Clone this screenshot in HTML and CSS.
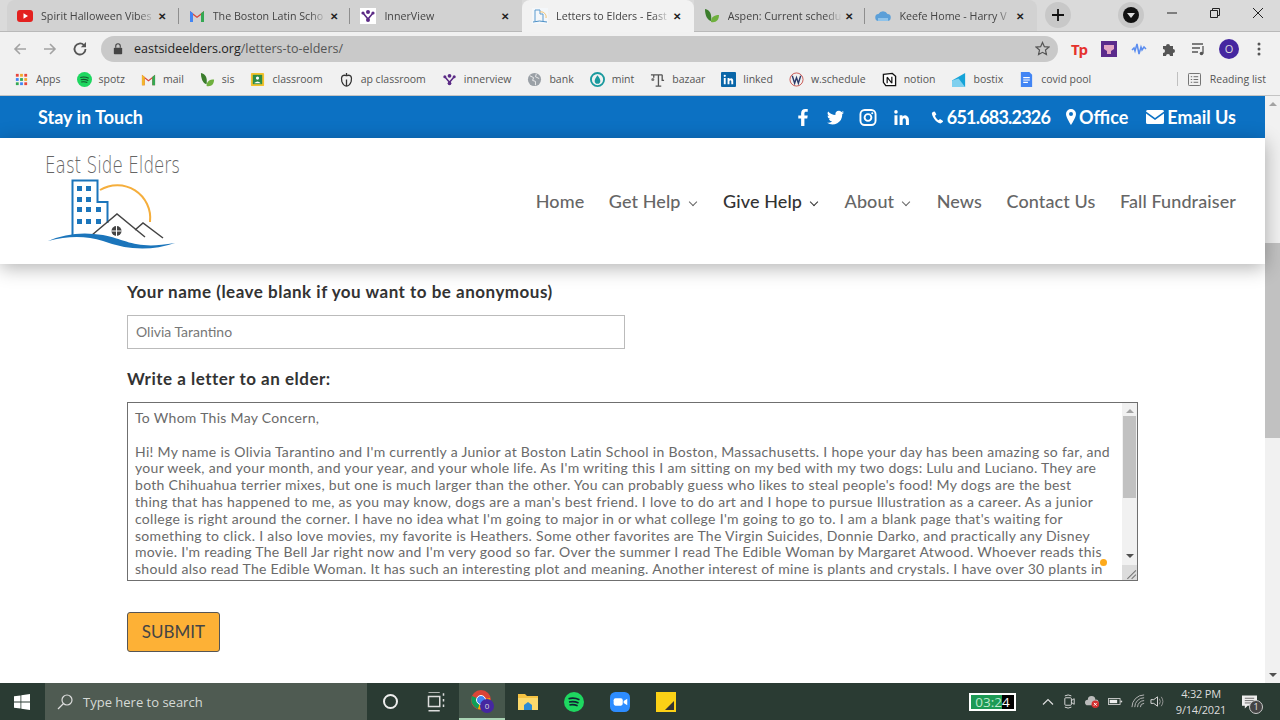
FILE: index.html
```html
<!DOCTYPE html>
<html lang="en">

<head>
    <meta charset="UTF-8">
    <title>Letters to Elders - East Side Elders</title>
    <link rel="stylesheet" href="styles.css">
</head>

<body>
    <!-- TABS -->
    <div class="tabstrip">
        <div class="tab tabSep tabFirst">
            <svg class="fav" viewBox="0 0 16 16"><rect y="2" width="16" height="12" rx="3" fill="#e3211f"/><path d="M6.5 5.2v5.6L11 8z" fill="#fff"/></svg>
            <span class="tabTitle">Spirit Halloween Vibes</span><span class="tabClose">✕</span>
        </div>
        <div class="tab tabSep">
            <svg class="fav" viewBox="0 0 16 16"><path d="M1 14V3l7 5.5L15 3v11h-3V7L8 10 4 7v7z" fill="#d9453a"/><path d="M1 14V3l3 2.3V14z" fill="#4285f4"/><path d="M15 14V3l-3 2.3V14z" fill="#34a853"/></svg>
            <span class="tabTitle">The Boston Latin Scho</span><span class="tabClose">✕</span>
        </div>
        <div class="tab">
            <svg class="fav" viewBox="0 0 16 16"><rect width="16" height="16" fill="#fff"/><path d="M3 5l5 6 5-6" fill="none" stroke="#5b2a86" stroke-width="1.6"/><circle cx="8" cy="4" r="2" fill="#5b2a86"/><circle cx="3" cy="5" r="1.6" fill="#5b2a86"/><circle cx="13" cy="5" r="1.6" fill="#5b2a86"/><circle cx="8" cy="12" r="2" fill="#5b2a86"/></svg>
            <span class="tabTitle">InnerView</span><span class="tabClose">✕</span>
        </div>
        <div class="tab tabActive">
            <svg class="fav" viewBox="0 0 16 16"><rect width="16" height="16" fill="#f4f7fa"/><path d="M3 13V2h5v4h3v7" fill="none" stroke="#5a9bd0"/><path d="M8 4a5 5 0 0 1 6 6" fill="none" stroke="#f3c06a"/><path d="M1 14q6-2 14 0" fill="none" stroke="#4b8fc6"/></svg>
            <span class="tabTitle">Letters to Elders - East</span><span class="tabClose">✕</span>
        </div>
        <div class="tab tabSep">
            <svg class="fav" viewBox="0 0 16 16"><path d="M1 1c5 1 7 5 6 12C3 12 1 7 1 1z" fill="#3b7d2c"/><path d="M7 14c0-5 3-7 8-7 0 5-3 8-8 7z" fill="#6fb03e"/></svg>
            <span class="tabTitle">Aspen: Current schedu</span><span class="tabClose">✕</span>
        </div>
        <div class="tab tabLast">
            <svg class="fav" viewBox="0 0 16 16"><path d="M4 13a3.5 3.5 0 0 1-.5-7A5 5 0 0 1 12.500 6 3.500 3.500 0 0 1 12 13z" fill="#5b9fd8"/><path d="M3 10h10v3H3z" fill="#8fc3ea"/></svg>
            <span class="tabTitle">Keefe Home - Harry V</span><span class="tabClose">✕</span>
        </div>
        <div class="newTab">
            <svg viewBox="0 0 12 12"><path d="M6 0v12M0 6h12" stroke="#111" stroke-width="1.800"/></svg>
        </div>
        <div class="profileBtn"><span class="profileDot"><span class="profileArrow"></span></span></div>
        <div class="winBtn"><svg viewBox="0 0 12 12"><path d="M1 6h10" stroke="#222"/></svg></div>
        <div class="winBtn"><svg viewBox="0 0 12 12"><path d="M1.500 3.500h7v7h-7zM3.500 3.500v-2h7v7h-2" fill="none" stroke="#222"/></svg></div>
        <div class="winBtn"><svg viewBox="0 0 12 12"><path d="M1 1l10 10M11 1L1 11" stroke="#222"/></svg></div>
    </div>

    <!-- ADDRESS BAR -->
    <div class="toolbar">
        <svg class="navIcon" viewBox="0 0 16 16"><path d="M14 8H3M8 3L3 8l5 5" fill="none" stroke="#a3a3a3" stroke-width="1.600"/></svg>
        <svg class="navIcon" viewBox="0 0 16 16"><path d="M2 8h11M8 3l5 5-5 5" fill="none" stroke="#a3a3a3" stroke-width="1.600"/></svg>
        <svg class="navIcon" viewBox="0 0 16 16"><path d="M13.500 8a5.500 5.500 0 1 1-1.600-3.900" fill="none" stroke="#555" stroke-width="1.800"/><path d="M14 1v5.200H8.800z" fill="#555"/></svg>
        <div class="omnibox">
            <svg class="lock" viewBox="0 0 12 14"><rect x="1" y="6" width="10" height="8" rx="1" fill="#444"/><path d="M3.300 6V4a2.700 2.700 0 0 1 5.400 0v2" fill="none" stroke="#444" stroke-width="1.300"/></svg>
            <span class="url"><b>eastsideelders.org</b>/letters-to-elders/</span>
            <svg class="star" viewBox="0 0 16 16"><path d="M8 1.500l2 4.500 4.800.5-3.600 3.200 1 4.800L8 12.100l-4.200 2.400 1-4.800L1.200 6.500 6 6z" fill="none" stroke="#555" stroke-width="1.300"/></svg>
        </div>
        <div class="extensions">
            <span class="ext extTp">Tp</span>
            <span class="ext"><svg viewBox="0 0 16 16"><rect width="16" height="16" fill="#5b2a8c"/><path d="M3 4h10v4l-3 2v3H6v-3L3 8z" fill="#e3a6c4"/></svg></span>
            <span class="ext"><svg viewBox="0 0 16 16"><path d="M1 9l2-2 1 3 2-7 2 10 2-7 1 3 2-3 2 2" fill="none" stroke="#5b8def" stroke-width="1.500"/></svg></span>
            <span class="ext"><svg viewBox="0 0 16 16"><path d="M2 5h3a2 2 0 0 1 4 0h3v3a2 2 0 0 1 0 4v3H9a2 2 0 0 0-4 0H2v-3a2 2 0 0 0 0-4z" fill="#555"/></svg></span>
            <span class="ext"><svg viewBox="0 0 16 16"><path d="M1 3h11M1 7h8M1 11h6" stroke="#555" stroke-width="1.300"/><path d="M12 5v7.500" stroke="#555" stroke-width="1.300"/><circle cx="10.500" cy="12.500" r="1.800" fill="#555"/></svg></span>
            <span class="ext"><span class="avatar">O</span></span>
            <span class="ext"><svg viewBox="0 0 16 16"><circle cx="8" cy="3" r="1.500" fill="#555"/><circle cx="8" cy="8" r="1.500" fill="#555"/><circle cx="8" cy="13" r="1.500" fill="#555"/></svg></span>
        </div>
    </div>

    <!-- BOOKMARKS -->
    <div class="bookmarks">
        <span class="bm"><svg viewBox="0 0 16 16"><path d="M2 2h3v3H2z" fill="#e8453c"/><path d="M6.500 2h3v3h-3z" fill="#f3a82d"/><path d="M11 2h3v3h-3z" fill="#e8453c"/><path d="M2 6.500h3v3H2z" fill="#4285f4"/><path d="M6.500 6.500h3v3h-3z" fill="#34a853"/><path d="M11 6.500h3v3h-3z" fill="#f3a82d"/><path d="M2 11h3v3H2z" fill="#34a853"/><path d="M6.500 11h3v3h-3z" fill="#4285f4"/><path d="M11 11h3v3h-3z" fill="#e8453c"/></svg>Apps</span>
        <span class="bm"><svg viewBox="0 0 16 16"><circle cx="8" cy="8" r="8" fill="#1ed760"/><path d="M3.500 5.800q4.500-1.300 9 .8M4 8.300q4-1 8 .7M4.500 10.700q3.500-.8 6.500.6" fill="none" stroke="#14532d" stroke-width="1.200"/></svg>spotz</span>
        <span class="bm"><svg viewBox="0 0 16 16"><path d="M1 14V3l7 5.500L15 3v11h-3V7L8 10 4 7v7z" fill="#d9453a"/><path d="M1 14V3l3 2.300V14z" fill="#f2b62c"/><path d="M15 14V3l-3 2.300V14z" fill="#34a853"/></svg>mail</span>
        <span class="bm"><svg viewBox="0 0 16 16"><path d="M1 1c5 1 7 5 6 12C3 12 1 7 1 1z" fill="#3b7d2c"/><path d="M7 15c0-5 3-7 8-7 0 5-3 8-8 7z" fill="#6fb03e"/></svg>sis</span>
        <span class="bm"><svg viewBox="0 0 16 16"><rect x="1" y="1" width="14" height="14" rx="1" fill="#f3c22c"/><rect x="3" y="3" width="10" height="10" fill="#2e8b47"/><circle cx="8" cy="6.500" r="1.700" fill="#fff"/><path d="M4.500 12q3.500-4 7 0z" fill="#fff"/></svg>classroom</span>
        <span class="bm"><svg viewBox="0 0 16 16"><path d="M8 4c-5-2-6 2-5 6 1 3 3 5 5 5s4-2 5-5c1-4 0-8-5-6zM8 4V1M8 8v7" fill="none" stroke="#333" stroke-width="1.400"/></svg>ap classroom</span>
        <span class="bm"><svg viewBox="0 0 16 16"><path d="M3 5l5 6 5-6" fill="none" stroke="#5b2a86" stroke-width="1.600"/><circle cx="8" cy="4" r="2" fill="#5b2a86"/><circle cx="3" cy="5" r="1.600" fill="#5b2a86"/><circle cx="13" cy="5" r="1.600" fill="#5b2a86"/><circle cx="8" cy="12" r="2" fill="#5b2a86"/></svg>innerview</span>
        <span class="bm"><svg viewBox="0 0 16 16"><circle cx="8" cy="8" r="7" fill="#9aa0a6"/><path d="M3 4l4 2-1 3 3 1v4M10 2l-1 3 4 2" fill="none" stroke="#eee"/></svg>bank</span>
        <span class="bm"><svg viewBox="0 0 16 16"><circle cx="8" cy="8" r="7" fill="none" stroke="#1a9a9e" stroke-width="2"/><path d="M8 3.500q3 4 3 6a3 3 0 0 1-6 0q0-2 3-6z" fill="#1a9a9e"/></svg>mint</span>
        <span class="bm"><svg viewBox="0 0 16 16"><path d="M1 3h12M4 3v3M9 3v12M6 15h6M13 3v6h2" fill="none" stroke="#555" stroke-width="1.400"/><circle cx="3" cy="8" r="1.600" fill="#777"/></svg>bazaar</span>
        <span class="bm"><svg viewBox="0 0 16 16"><rect width="16" height="16" rx="1" fill="#0a66a8"/><path d="M3 6.500h2V13H3zM7 6.500h2v1q3-2.200 4 1V13h-2V9.500q-1-1.500-2 0V13H7z" fill="#fff"/><circle cx="4" cy="4" r="1.200" fill="#fff"/></svg>linked</span>
        <span class="bm"><svg viewBox="0 0 16 16"><circle cx="8" cy="8" r="7" fill="none" stroke="#c9544f"/><path d="M3.500 4l2.500 8 2-6 2 6 2.500-8" fill="none" stroke="#2a3a6a" stroke-width="1.500"/></svg>w.schedule</span>
        <span class="bm"><svg viewBox="0 0 16 16"><path d="M1.500 2.500L11 1.500l3.500 3V14.500H4L1.500 11z" fill="#fff" stroke="#111" stroke-width="1.400"/><path d="M5.500 5.500v6.500M5.500 5.500l5 6.500M10.500 5v7" stroke="#111" stroke-width="1.300"/></svg>notion</span>
        <span class="bm"><svg viewBox="0 0 16 16"><path d="M0 16V9L14 1v15z" fill="#15a3d8"/><path d="M0 9l7-2 7 9H0z" fill="#7fd0ef"/></svg>bostix</span>
        <span class="bm"><svg viewBox="0 0 16 16"><path d="M2 0h9l3 3v13H2z" fill="#4285f4"/><path d="M4.500 6h7M4.500 8.500h7M4.500 11h5" stroke="#fff" stroke-width="1.200"/></svg>covid pool</span>
        <span class="readingList"><svg viewBox="0 0 14 14"><rect x=".500" y=".500" width="13" height="13" rx="1" fill="none" stroke="#666"/><path d="M3 4h1.500M6 4h5M3 7h1.500M6 7h5M3 10h1.500M6 10h5" stroke="#666"/></svg>Reading list</span>
    </div>

    <!-- PAGE -->
    <div class="viewport">
        <div class="page">
            <div class="topBar">
                <span class="stayTitle">Stay in Touch</span>
                <div class="contactLinks">
                    <svg class="social socialF" viewBox="0 0 10 18"><path d="M3 18V10H0V7h3V4.500C3 1.500 4.800 0 7.300 0H10v3H8.200C7 3 6.500 3.500 6.500 4.700V7H10l-.5 3h-3v8z" fill="#fff"/></svg>
                    <svg class="social socialT" viewBox="0 0 20 16"><path d="M20 2a8 8 0 0 1-2.300.600A4 4 0 0 0 19.500.400a8 8 0 0 1-2.600 1A4 4 0 0 0 10 5 11.500 11.500 0 0 1 1.400.800 4 4 0 0 0 2.600 6.200 4 4 0 0 1 .8 5.700a4 4 0 0 0 3.200 4 4 4 0 0 1-1.800.1 4 4 0 0 0 3.800 2.800A8 8 0 0 1 0 14.200 11.500 11.500 0 0 0 17.900 4 8 8 0 0 0 20 2z" fill="#fff"/></svg>
                    <svg class="social socialI" viewBox="0 0 18 18"><rect x="1" y="1" width="16" height="16" rx="4.500" fill="none" stroke="#fff" stroke-width="2"/><circle cx="9" cy="9" r="3.600" fill="none" stroke="#fff" stroke-width="2"/><circle cx="13.500" cy="4.500" r="1.100" fill="#fff"/></svg>
                    <svg class="social socialL" viewBox="0 0 16 16"><path d="M.5 5.500h3.200V16H.5zM6 5.500h3v1.500q3.500-3 6 .5.900 1.300.9 3V16h-3.200v-5q-.3-2.600-2.200-2.200-1.300.3-1.300 2.200v5H6z" fill="#fff"/><circle cx="2.100" cy="2" r="1.900" fill="#fff"/></svg>
                    <span class="contact contactPhone">
                        <svg viewBox="0 0 14 14"><path d="M3.200.5L1 1.800C.3 5 5.500 12.800 10.300 13.500l2.700-2-.3-1-3-1.800-1.600 1.300C6.600 9.300 4.600 6.800 4.300 5.200L5.800 3.700 4.200.8z" fill="#fff"/></svg><span class="phoneNum">651.683.2326</span>
                    </span>
                    <span class="contact contactOffice">
                        <svg class="pinIcon" viewBox="0 0 10 16"><path d="M5 0a5 5 0 0 0-5 5c0 3.500 5 11 5 11s5-7.500 5-11a5 5 0 0 0-5-5zm0 7a2 2 0 1 1 0-4 2 2 0 0 1 0 4z" fill="#fff"/></svg>Office
                    </span>
                    <span class="contact">
                        <svg class="mailIcon" viewBox="0 0 18 14"><path d="M1.500 0h15A1.500 1.500 0 0 1 18 1.500L9 8 0 1.500A1.500 1.500 0 0 1 1.500 0zM0 3.500L9 10l9-6.500v9A1.500 1.500 0 0 1 16.500 14h-15A1.500 1.500 0 0 1 0 12.500z" fill="#fff"/></svg>Email Us
                    </span>
                </div>
            </div>

            <div class="siteHeader">
                <svg class="logo" viewBox="40 138 150 126">
                    <text x="45" y="173" class="logoText" textLength="135" lengthAdjust="spacingAndGlyphs">East  Side  Elders</text>
                    <path d="M100 190a33 33 0 0 1 50 32" fill="none" stroke="#f5ae3c" stroke-width="2"/>
                    <path d="M72.500 235V180.500h25v21.500h10v21" fill="none" stroke="#1b75bb" stroke-width="2"/>
                    <path d="M77 186h5v5h-5zM86 186h5v5h-5zM77 197h5v5h-5zM86 197h5v5h-5zM77 207h5v5h-5zM86 207h5v5h-5zM96 207h5v5h-5zM77 219h5v5h-5zM86 219h5v5h-5zM96 219h5v5h-5z" fill="#1b75bb"/>
                    <path d="M92 235l25-21 28 23M135 230l8-7 20 15" fill="none" stroke="#444" stroke-width="1.500"/>
                    <circle cx="116.500" cy="231" r="5" fill="#444"/>
                    <path d="M111.500 231h10M116.500 226v10" stroke="#fff"/>
                    <path d="M48 241q25-11 55-6c25 5 32 15 72 8q-35 12-72-2-25-8-55 0z" fill="#1b75bb"/>
                </svg>
                <nav class="mainNav">
                    <a>Home</a>
                    <a>Get Help<i class="chev"></i></a>
                    <a class="navCurrent">Give Help<i class="chev"></i></a>
                    <a>About<i class="chev"></i></a>
                    <a>News</a>
                    <a>Contact Us</a>
                    <a>Fall Fundraiser</a>
                </nav>
            </div>

            <form class="letterForm">
                <label class="fieldLabel" for="txtNome">Your name (leave blank if you want to be anonymous)</label>
                <input class="nameInput" type="text" id="txtNome" value="Olivia Tarantino">

                <label class="fieldLabel letterLabel">Write a letter to an elder:</label>
                <div class="letterBox">
                    <div class="letterText">To Whom This May Concern,

Hi! My name is Olivia Tarantino and I'm currently a Junior at Boston Latin School in Boston, Massachusetts. I hope your day has been amazing so far, and
your week, and your month, and your year, and your whole life. As I'm writing this I am sitting on my bed with my two dogs: Lulu and Luciano. They are
both Chihuahua terrier mixes, but one is much larger than the other. You can probably guess who likes to steal people's food! My dogs are the best
thing that has happened to me, as you may know, dogs are a man's best friend. I love to do art and I hope to pursue Illustration as a career. As a junior
college is right around the corner. I have no idea what I'm going to major in or what college I'm going to go to. I am a blank page that's waiting for
something to click. I also love movies, my favorite is Heathers. Some other favorites are The Virgin Suicides, Donnie Darko, and practically any Disney
movie. I'm reading The Bell Jar right now and I'm very good so far. Over the summer I read The Edible Woman by Margaret Atwood. Whoever reads this
should also read The Edible Woman. It has such an interesting plot and meaning. Another interest of mine is plants and crystals. I have over 30 plants in</div>
                    <div class="boxScroll">
                        <i class="arrowUp"></i>
                        <div class="boxThumb"></div>
                        <i class="arrowDown"></i>
                        <svg class="grip" viewBox="0 0 14 14"><path d="M13 5l-8 8M13 9l-4 4" stroke="#777"/></svg>
                    </div>
                    <span class="grammarDot"></span>
                </div>

                <button class="submitBtn" type="button">SUBMIT</button>
            </form>
        </div>
        <div class="pageScroll">
            <i class="arrowUp"></i>
            <div class="pageThumb"></div>
            <i class="arrowDown"></i>
        </div>
    </div>

    <!-- TASKBAR -->
    <div class="taskbar">
        <div class="startBtn"><svg viewBox="0 0 16 16"><path d="M0 2.300l6.500-.9v6.200H0zM7.300 1.300L16 0v7.600H7.300zM0 8.400h6.500v6.200L0 13.700zM7.300 8.400H16V16l-8.700-1.300z" fill="#fff"/></svg></div>
        <div class="searchBox">
            <svg viewBox="0 0 16 16"><circle cx="10" cy="6" r="5" fill="none" stroke="#ddd" stroke-width="1.200"/><path d="M6.500 9.500L1 15" stroke="#ddd" stroke-width="1.200"/></svg>
            Type here to search
        </div>
        <div class="taskIcon"><span class="cortana"></span></div>
        <div class="taskIcon"><svg viewBox="0 0 16 16"><path d="M2 0h9M2 15h9M2 3.500h9v8H2zM14 1v2M14 5.500v2M14 10v2" fill="none" stroke="#ddd" stroke-width="1.200"/></svg></div>
        <div class="taskIcon taskActive">
            <svg class="chromeIcon" viewBox="0 0 24 24"><circle cx="11" cy="11" r="10" fill="#db4437"/><path d="M11 11L2 7a10 10 0 0 0 6 13z" fill="#0f9d58"/><path d="M11 11l9-2a10 10 0 0 1-12 11z" fill="#f4b400"/><circle cx="11" cy="11" r="4.500" fill="#4285f4" stroke="#fff"/><circle cx="17" cy="17" r="7" fill="#4527a0"/><text x="17" y="20" class="chromeBadge">0</text></svg>
        </div>
        <div class="taskIcon"><svg viewBox="0 0 20 20"><path d="M0 2h7l2 2h11v14H0z" fill="#f5c242"/><path d="M0 6h20v12H0z" fill="#fbd96b"/><path d="M6 18v-5l4-3 4 3v5z" fill="#2a8bd6"/></svg></div>
        <div class="taskIcon"><svg viewBox="0 0 22 22"><circle cx="11" cy="11" r="11" fill="#1ed760"/><path d="M5 7.500q6-1.800 12 1M5.500 11q5.500-1.300 10.500 1M6 14.300q4.500-1 9 .9" fill="none" stroke="#123" stroke-width="1.800"/></svg></div>
        <div class="taskIcon"><svg viewBox="0 0 22 22"><rect width="22" height="22" rx="6" fill="#2d8cff"/><rect x="4" y="7" width="10" height="8" rx="2" fill="#fff"/><path d="M15 10l4-2.500v7L15 12z" fill="#fff"/></svg></div>
        <div class="taskIcon"><svg viewBox="0 0 20 20"><path d="M0 0h20v20H0z" fill="#fcd116"/><path d="M9 18l9-9v9z" fill="#333"/></svg></div>

        <div class="timer"><span class="timerFill">03:2</span><span class="timerRest">4</span></div>
        <div class="tray">
            <svg class="trayUp" viewBox="0 0 12 8"><path d="M1 7l5-5 5 5" fill="none" stroke="#ddd" stroke-width="1.200"/></svg>
            <svg class="trayMeet" viewBox="0 0 16 16"><rect x="3" y="4" width="7" height="8" rx="1" fill="none" stroke="#ddd"/><path d="M10 7l3-2v6l-3-2M3 2q3.500-2 7 0M3 14q3.500 2 7 0" fill="none" stroke="#ddd"/></svg>
            <svg class="trayCloud" viewBox="0 0 16 16"><path d="M3 12a3 3 0 0 1 0-6 4 4 0 0 1 8 0 3 3 0 0 1 1 6z" fill="#bbb"/><circle cx="11" cy="11" r="4" fill="#d32f2f"/><path d="M9.500 9.500l3 3M12.500 9.500l-3 3" stroke="#fff"/></svg>
            <svg class="trayBatt" viewBox="0 0 18 10"><rect x=".500" y="1.500" width="14" height="7" fill="none" stroke="#ddd"/><rect x="2" y="3" width="9" height="4" fill="#eee"/><path d="M15 4h2v2h-2z" fill="#ddd"/></svg>
            <svg class="trayWifi" viewBox="0 0 16 16"><path d="M1 14A13 13 0 0 1 14 1M4 14A10 10 0 0 1 14 4M7 14a7 7 0 0 1 7-7M10 14a4 4 0 0 1 4-4" fill="none" stroke="#bbb" stroke-width="1"/></svg>
            <svg class="trayVol" viewBox="0 0 16 16"><path d="M1 6h3l4-3v10l-4-3H1z" fill="none" stroke="#ddd"/><path d="M10 5q2 3 0 6M12 3q3.500 5 0 10" fill="none" stroke="#999"/></svg>
        </div>
        <div class="clock"><div>4:32 PM</div><div>9/14/2021</div></div>
        <div class="notif">
            <svg viewBox="0 0 16 14"><path d="M0 0h16v11H6l-3 3v-3H0z" fill="#eee"/><path d="M3 3h10M3 5.500h10M3 8h7" stroke="#666"/></svg>
            <span class="notifCount">1</span>
        </div>
    </div>
</body>

</html>
```

FILE: styles.css
```css
* {
    box-sizing: border-box;
}

body {
    margin: 0;
    width: 1280px;
    height: 720px;
    overflow: hidden;
    display: flex;
    flex-direction: column;
    font-family: "Open Sans", sans-serif;
    background: #fff;
}

/* TABS */
.tabstrip {
    height: 32px;
    flex: none;
    display: flex;
    align-items: flex-end;
    padding-left: 7px;
    background: #dadada;
    border-bottom: 1px solid #b9b9b9;
}

.tab {
    width: 171.7px;
    height: 31px;
    flex: none;
    display: flex;
    align-items: center;
    padding: 0 10px;
    font-size: 10.7px;
    color: #444;
    background: #d2d2d2;
}

.tabSep {
    background: linear-gradient(#8e8e8e, #8e8e8e) right center / 1px 16px no-repeat, #d2d2d2;
}

.tabFirst {
    border-top-left-radius: 8px;
}

.tabLast {
    border-top-right-radius: 8px;
}

.tabActive {
    background: #f2f2f2;
    border-radius: 8px 8px 0 0;
    height: 32px;
    margin-bottom: -1px;
}

.fav {
    width: 16px;
    height: 16px;
    flex: none;
}

.tabTitle {
    margin-left: 8px;
    width: 114px;
    flex: none;
    white-space: nowrap;
    overflow: hidden;
    -webkit-mask-image: linear-gradient(90deg, #000 85%, transparent);
    mask-image: linear-gradient(90deg, #000 85%, transparent);
}

.tabClose {
    margin-left: 3px;
    font-size: 10px;
    font-weight: bold;
    color: #222;
}

.newTab {
    width: 26px;
    height: 26px;
    margin: 0 0 3px 8px;
    flex: none;
    border-radius: 50%;
    background: #c8c8c8;
    display: flex;
    align-items: center;
    justify-content: center;
}

.newTab svg {
    width: 12px;
    height: 12px;
}

.profileBtn {
    width: 26px;
    height: 26px;
    margin: 0 0 3px 47px;
    flex: none;
    border-radius: 50%;
    background: #c8c8c8;
    display: flex;
    align-items: center;
    justify-content: center;
}

.profileDot {
    width: 16px;
    height: 16px;
    border-radius: 50%;
    background: #111;
    display: flex;
    align-items: center;
    justify-content: center;
}

.profileArrow {
    width: 0;
    height: 0;
    border-left: 4px solid transparent;
    border-right: 4px solid transparent;
    border-top: 5px solid #ddd;
}

.winBtn {
    width: 43px;
    flex: none;
    align-self: flex-start;
    padding-top: 7px;
    display: flex;
    justify-content: center;
}

.profileBtn + .winBtn {
    margin-left: 6.5px;
}

.winBtn svg {
    width: 12px;
    height: 12px;
}

/* ADDRESS BAR */
.toolbar {
    height: 33px;
    flex: none;
    display: flex;
    align-items: center;
    padding: 0 6px 0 5px;
    background: #f1f1f1;
}

.navIcon {
    width: 16px;
    height: 16px;
    flex: none;
    margin: 0 7px;
}

.omnibox {
    width: 957px;
    height: 26px;
    margin-left: 6px;
    flex: none;
    display: flex;
    align-items: center;
    padding: 0 8px 0 12px;
    border-radius: 13px;
    background: #c9c9c9;
}

.lock {
    width: 10px;
    height: 13px;
    flex: none;
}

.url {
    margin-left: 11px;
    font-size: 12.5px;
    color: #555;
    white-space: nowrap;
}

.url b {
    font-weight: normal;
    color: #222;
}

.star {
    width: 15px;
    height: 15px;
    margin-left: auto;
}

.extensions {
    display: flex;
    margin-left: 6px;
}

.ext {
    width: 30px;
    height: 20px;
    display: flex;
    align-items: center;
    justify-content: center;
}

.ext svg {
    width: 16px;
    height: 16px;
}

.extTp {
    font-size: 15px;
    font-weight: bold;
    color: #e5322d;
    letter-spacing: -1px;
}

.avatar {
    width: 20px;
    height: 20px;
    border-radius: 50%;
    background: #4527a0;
    color: #ddd;
    font-size: 11px;
    text-align: center;
    line-height: 20px;
}

/* BOOKMARKS */
.bookmarks {
    height: 31px;
    flex: none;
    display: flex;
    align-items: center;
    padding: 0 14px 2px 14px;
    font-size: 10.5px;
    color: #555;
    background: #f1f1f1;
    border-bottom: 1px solid #c4c4c4;
}

.bm {
    display: flex;
    align-items: center;
    gap: 7px;
    margin-right: 16px;
    white-space: nowrap;
}

.bm svg {
    width: 15px;
    height: 15px;
    flex: none;
}

.readingList {
    margin-left: auto;
    padding-left: 10px;
    display: flex;
    align-items: center;
    gap: 9px;
    border-left: 1px solid #c0c0c0;
}

.readingList svg {
    width: 13px;
    height: 13px;
}

/* PAGE */
.viewport {
    flex: 1;
    min-height: 0;
    display: flex;
}

.page {
    flex: 1;
    min-width: 0;
    font-family: "Lato", sans-serif;
}

.topBar {
    height: 42px;
    display: flex;
    align-items: center;
    justify-content: space-between;
    padding: 0 29px 0 38px;
    color: #fff;
    font-size: 18px;
    font-weight: 700;
    background: #0c71c3;
}

.contactLinks {
    display: flex;
    align-items: center;
}

.social {
    height: 17px;
    flex: none;
}

.socialF {
    width: 10px;
    margin-right: 19px;
}

.socialT {
    width: 17px;
    margin-right: 15px;
}

.socialI {
    width: 18px;
    margin-right: 17px;
}

.socialL {
    width: 15px;
    margin-right: 22px;
}

.contact {
    display: flex;
    align-items: center;
    gap: 3px;
    margin-left: 18px;
}

.contactPhone {
    margin-left: 0;
}

.contactOffice {
    margin-left: 16px;
}

.phoneNum {
    letter-spacing: -.8px;
}

.contact svg {
    width: 13px;
    height: 15px;
}

.contact .pinIcon {
    width: 10px;
    height: 16px;
}

.contact .mailIcon {
    width: 18px;
    height: 14px;
}

.siteHeader {
    height: 126px;
    display: flex;
    align-items: center;
    padding: 0 29px 0 40px;
    background: #fff;
    box-shadow: 0 4px 18px rgba(0, 0, 0, .3);
    position: relative;
}

.logo {
    width: 150px;
    height: 126px;
    flex: none;
}

.logoText {
    font-family: "DejaVu Sans", sans-serif;
    font-weight: 200;
    font-size: 23px;
    fill: #666;
}

.mainNav {
    margin-left: auto;
    display: flex;
    align-items: center;
    gap: 24.5px;
    font-size: 18px;
    font-weight: 500;
    letter-spacing: .1px;
    color: #666;
}

.navCurrent {
    color: #333;
}

.chev {
    display: inline-block;
    width: 6px;
    height: 6px;
    margin: 0 3px 3px 9px;
    border-right: 1.5px solid currentColor;
    border-bottom: 1.5px solid currentColor;
    transform: rotate(45deg);
}

.letterForm {
    display: flex;
    flex-direction: column;
    align-items: flex-start;
    padding: 18px 0 0 127px;
}

.fieldLabel {
    font-size: 17px;
    line-height: 20px;
    font-weight: 700;
    letter-spacing: .5px;
    color: #333;
}

.nameInput {
    width: 498px;
    height: 34px;
    margin-top: 13px;
    padding: 0 8px 2px;
    border: 1px solid #bbb;
    font-family: inherit;
    font-size: 14px;
    color: #777;
}

.letterLabel {
    margin-top: 20px;
}

.letterBox {
    width: 1011px;
    height: 179px;
    margin-top: 13px;
    display: flex;
    justify-content: space-between;
    border: 1.5px solid #6f6f6f;
    position: relative;
    overflow: hidden;
}

.letterText {
    padding: 7px 0 0 7px;
    font-size: 14px;
    line-height: 16.8px;
    letter-spacing: .3px;
    color: #6a6a6a;
    white-space: pre;
}

.boxScroll {
    width: 15px;
    flex: none;
    display: flex;
    flex-direction: column;
    align-items: center;
    background: #f1f1f1;
    padding-top: 6px;
}

.boxThumb {
    width: 13px;
    height: 82px;
    margin: 3px 0 56px;
    background: #c1c1c1;
}

.grip {
    width: 15px;
    height: 15px;
    margin-top: auto;
    background: #dcdcdc;
}

.arrowUp,
.arrowDown {
    width: 0;
    height: 0;
    flex: none;
    border-left: 4px solid transparent;
    border-right: 4px solid transparent;
}

.arrowUp {
    border-bottom: 4px solid #a3a3a3;
}

.arrowDown {
    border-top: 4px solid #505050;
}

.grammarDot {
    position: absolute;
    left: 972px;
    top: 156px;
    width: 7px;
    height: 7px;
    border-radius: 50%;
    background: #fdaa1c;
}

.submitBtn {
    width: 93px;
    height: 40px;
    margin-top: 30.5px;
    border: 1.5px solid #555;
    border-radius: 3px;
    font-family: inherit;
    font-size: 17px;
    color: #444;
    background: #fdb136;
}

.pageScroll {
    width: 15px;
    flex: none;
    display: flex;
    flex-direction: column;
    align-items: center;
    background: #f1f1f1;
    padding: 6px 0;
}

.pageThumb {
    width: 15px;
    height: 195px;
    margin-top: 137px;
    background: #c1c1c1;
}

.pageScroll .arrowDown {
    margin-top: auto;
}

/* TASKBAR */
.taskbar {
    height: 37px;
    flex: none;
    display: flex;
    align-items: center;
    color: #e6e6e6;
    background: #2a3b33;
    font-family: "Open Sans", sans-serif;
}

.startBtn {
    width: 45px;
    display: flex;
    justify-content: center;
    padding-right: 2px;
}

.startBtn svg {
    width: 16px;
    height: 16px;
}

.searchBox {
    width: 322px;
    height: 37px;
    flex: none;
    display: flex;
    align-items: center;
    gap: 10px;
    padding-left: 12px;
    font-size: 13px;
    color: #d5dad6;
    background: #4f5b52;
}

.searchBox svg {
    width: 16px;
    height: 16px;
}

.taskIcon {
    width: 46px;
    height: 37px;
    flex: none;
    display: flex;
    align-items: center;
    justify-content: center;
}

.taskIcon svg {
    width: 20px;
    height: 20px;
}

.taskActive {
    background: #46574c;
    border-bottom: 2px solid #a9d3b4;
}

.taskIcon .chromeIcon {
    width: 24px;
    height: 24px;
}

.chromeBadge {
    font-size: 8px;
    fill: #ddd;
    text-anchor: middle;
}

.cortana {
    width: 15px;
    height: 15px;
    border: 2px solid #eee;
    border-radius: 50%;
}

.timer {
    width: 47px;
    height: 18px;
    margin-left: 280px;
    flex: none;
    display: flex;
    font-size: 13.5px;
    line-height: 14px;
    text-align: center;
    border: 2px solid #fff;
}

.timerFill {
    width: 31px;
    color: #bfe8cd;
    text-align: right;
    background: #1c9a55;
}

.timerRest {
    flex: 1;
    text-align: left;
    color: #fff;
    background: #000;
}

.tray {
    display: flex;
    align-items: center;
    margin-left: 26px;
}

.tray svg {
    width: 15px;
    height: 15px;
    flex: none;
}

.tray .trayMeet,
.tray .trayCloud,
.tray .trayBatt,
.tray .trayWifi {
    margin-left: 8px;
}

.tray .trayVol {
    margin-left: 4px;
}

.tray .trayUp {
    width: 12px;
}

.clock {
    width: 62px;
    margin-left: 5px;
    flex: none;
    font-size: 11px;
    line-height: 16px;
    letter-spacing: -.2px;
    text-align: center;
    color: #ddd;
}

.notif {
    margin-left: 10px;
    position: relative;
    display: flex;
}

.notif svg {
    width: 15px;
    height: 14px;
}

.notifCount {
    position: absolute;
    left: 7px;
    top: 5px;
    width: 14px;
    height: 14px;
    font-size: 9px;
    line-height: 12px;
    text-align: center;
    border: 1px solid #ccc;
    border-radius: 50%;
    background: #444;
}
```
